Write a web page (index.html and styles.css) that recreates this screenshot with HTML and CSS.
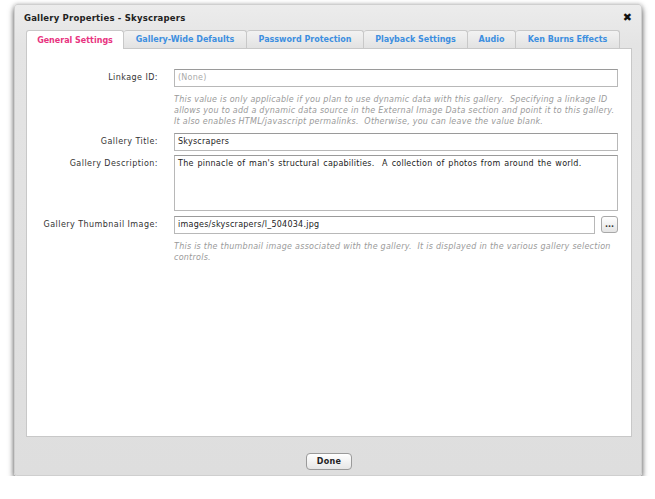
FILE: index.html
```html
<!DOCTYPE html>
<html lang="en">
<head>
  <meta charset="UTF-8" />
  <title>Gallery Properties - Skyscrapers</title>
  <link rel="stylesheet" href="styles.css">
</head>
<body>
  <div class="dialog">
    <div class="dialog-head">
      <span class="dialog-title">Gallery Properties - Skyscrapers</span>
      <span class="close-btn">&#x2716;</span>
    </div>

    <!-- Tabs -->
    <div class="tabs">
      <div class="tab active">General Settings</div>
      <div class="tab t2">Gallery-Wide Defaults</div>
      <div class="tab t3">Password Protection</div>
      <div class="tab t4">Playback Settings</div>
      <div class="tab t5">Audio</div>
      <div class="tab t6">Ken Burns Effects</div>
    </div>

    <div class="panel">
      <div class="row">
        <label>Linkage ID:</label>
        <div class="field">
          <div class="input placeholder">(None)</div>
          <p class="help">This value is only applicable if you plan to use dynamic data with this gallery.&nbsp; Specifying a linkage ID<br>allows you to add a dynamic data source in the External Image Data section and point it to this gallery.<br>It also enables HTML/javascript permalinks.&nbsp; Otherwise, you can leave the value blank.</p>
        </div>
      </div>
      <div class="row">
        <label>Gallery Title:</label>
        <div class="field">
          <div class="input">Skyscrapers</div>
        </div>
      </div>
      <div class="row desc">
        <label>Gallery Description:</label>
        <div class="field">
          <div class="input textarea">The pinnacle of man's structural capabilities.&nbsp; A collection of photos from around the world.</div>
        </div>
      </div>
      <div class="row">
        <label>Gallery Thumbnail Image:</label>
        <div class="field">
          <div class="browse">
            <div class="input">images/skyscrapers/l_504034.jpg</div>
            <button class="dots">...</button>
          </div>
          <p class="help">This is the thumbnail image associated with the gallery.&nbsp; It is displayed in the various gallery selection<br>controls.</p>
        </div>
      </div>
    </div>

    <div class="footer">
      <button class="done-btn">Done</button>
    </div>
  </div>
</body>
</html>
```

FILE: styles.css
```css
* {
  box-sizing: border-box;
}

body {
  margin: 0;
  background: #ffffff;
  font-family: 'DejaVu Sans', Verdana, sans-serif;
  font-size: 8px;
  color: #333;
}

.dialog {
  margin: 4px 0 0 14px;
  width: 628px;
  height: 472px;
  background: linear-gradient(#ececec, #e4e4e4 40px, #dedede);
  border: 1px solid #cfcfcf;
  border-radius: 3px;
  box-shadow: 0 4px 6px rgba(0, 0, 0, 0.6), 0 0 4px rgba(0, 0, 0, 0.2);
  display: flex;
  flex-direction: column;
}

.dialog-head {
  height: 25px;
  display: flex;
  align-items: center;
  justify-content: space-between;
  padding: 0 9px 0 9px;
}

.dialog-title {
  font-weight: bold;
  font-size: 8.5px;
  letter-spacing: 0.2px;
  color: #222;
}

.close-btn {
  font-size: 11px;
  font-weight: bold;
  color: #111;
}

.tabs {
  display: flex;
  padding-left: 11px;
  height: 18px;
}

.tab {
  width: 98px;
  height: 18px;
  background: linear-gradient(#f2f2f2, #e2e2e2);
  border: 1px solid #c8c8c8;
  border-bottom: none;
  border-left: none;
  border-radius: 3px 3px 0 0;
  color: #3d8fe0;
  font-weight: bold;
  font-size: 8px;
  display: flex;
  align-items: center;
  justify-content: center;
}

.tab.active {
  background: #ffffff;
  color: #e8347f;
  border-left: 1px solid #c8c8c8;
  height: 19px;
  position: relative;
  z-index: 1;
}

.t2 { width: 123px; }
.t3 { width: 117px; }
.t4 { width: 104px; }
.t5 { width: 48px; }
.t6 { width: 104px; }

.panel {
  margin: 0 9px 0 11px;
  height: 389px;
  background: #ffffff;
  border: 1px solid #c8c8c8;
  padding: 20px 13px 0 0;
}

.row {
  display: flex;
  margin-bottom: 4px;
}

.row.desc {
  margin-bottom: 5px;
}

.row label {
  flex-shrink: 0;
  width: 131px;
  text-align: right;
  padding-top: 4px;
  letter-spacing: 0.45px;
  color: #333;
}

.field {
  flex: 1;
  min-width: 0;
  margin-left: 16px;
}

.input {
  height: 18px;
  border: 1px solid #b8b8b8;
  border-top-color: #9a9a9a;
  background: #fff;
  padding: 3px 0 0 3px;
  color: #222;
  letter-spacing: 0.25px;
  word-spacing: 1px;
  white-space: nowrap;
}

.input.placeholder {
  color: #aaa;
}

.input.textarea {
  height: 56px;
}

.browse {
  display: flex;
  gap: 6px;
}

.browse .input {
  flex: 1;
}

.dots {
  width: 17px;
  height: 17px;
  padding: 0;
  border: 1px solid #a8a8a8;
  border-radius: 3px;
  background: linear-gradient(#ffffff, #e4e4e4);
  font-family: 'DejaVu Sans', sans-serif;
  font-size: 8px;
  font-weight: bold;
  color: #333;
  line-height: 10px;
}

.help {
  margin: 7px 0 2px 0;
  font-style: italic;
  color: #9a9a9a;
  line-height: 11px;
  font-size: 8px;
  letter-spacing: 0.25px;
  white-space: nowrap;
}

.footer {
  flex: 1;
  display: flex;
  align-items: flex-start;
  justify-content: center;
  padding-top: 16px;
}

.done-btn {
  width: 46px;
  height: 17px;
  border: 1px solid #9a9a9a;
  border-radius: 4px;
  background: linear-gradient(#ffffff, #e6e6e6);
  font-family: 'DejaVu Sans', sans-serif;
  font-size: 8px;
  font-weight: bold;
  letter-spacing: 0.3px;
  color: #222;
  padding: 0;
  margin-left: 2px;
}
```
